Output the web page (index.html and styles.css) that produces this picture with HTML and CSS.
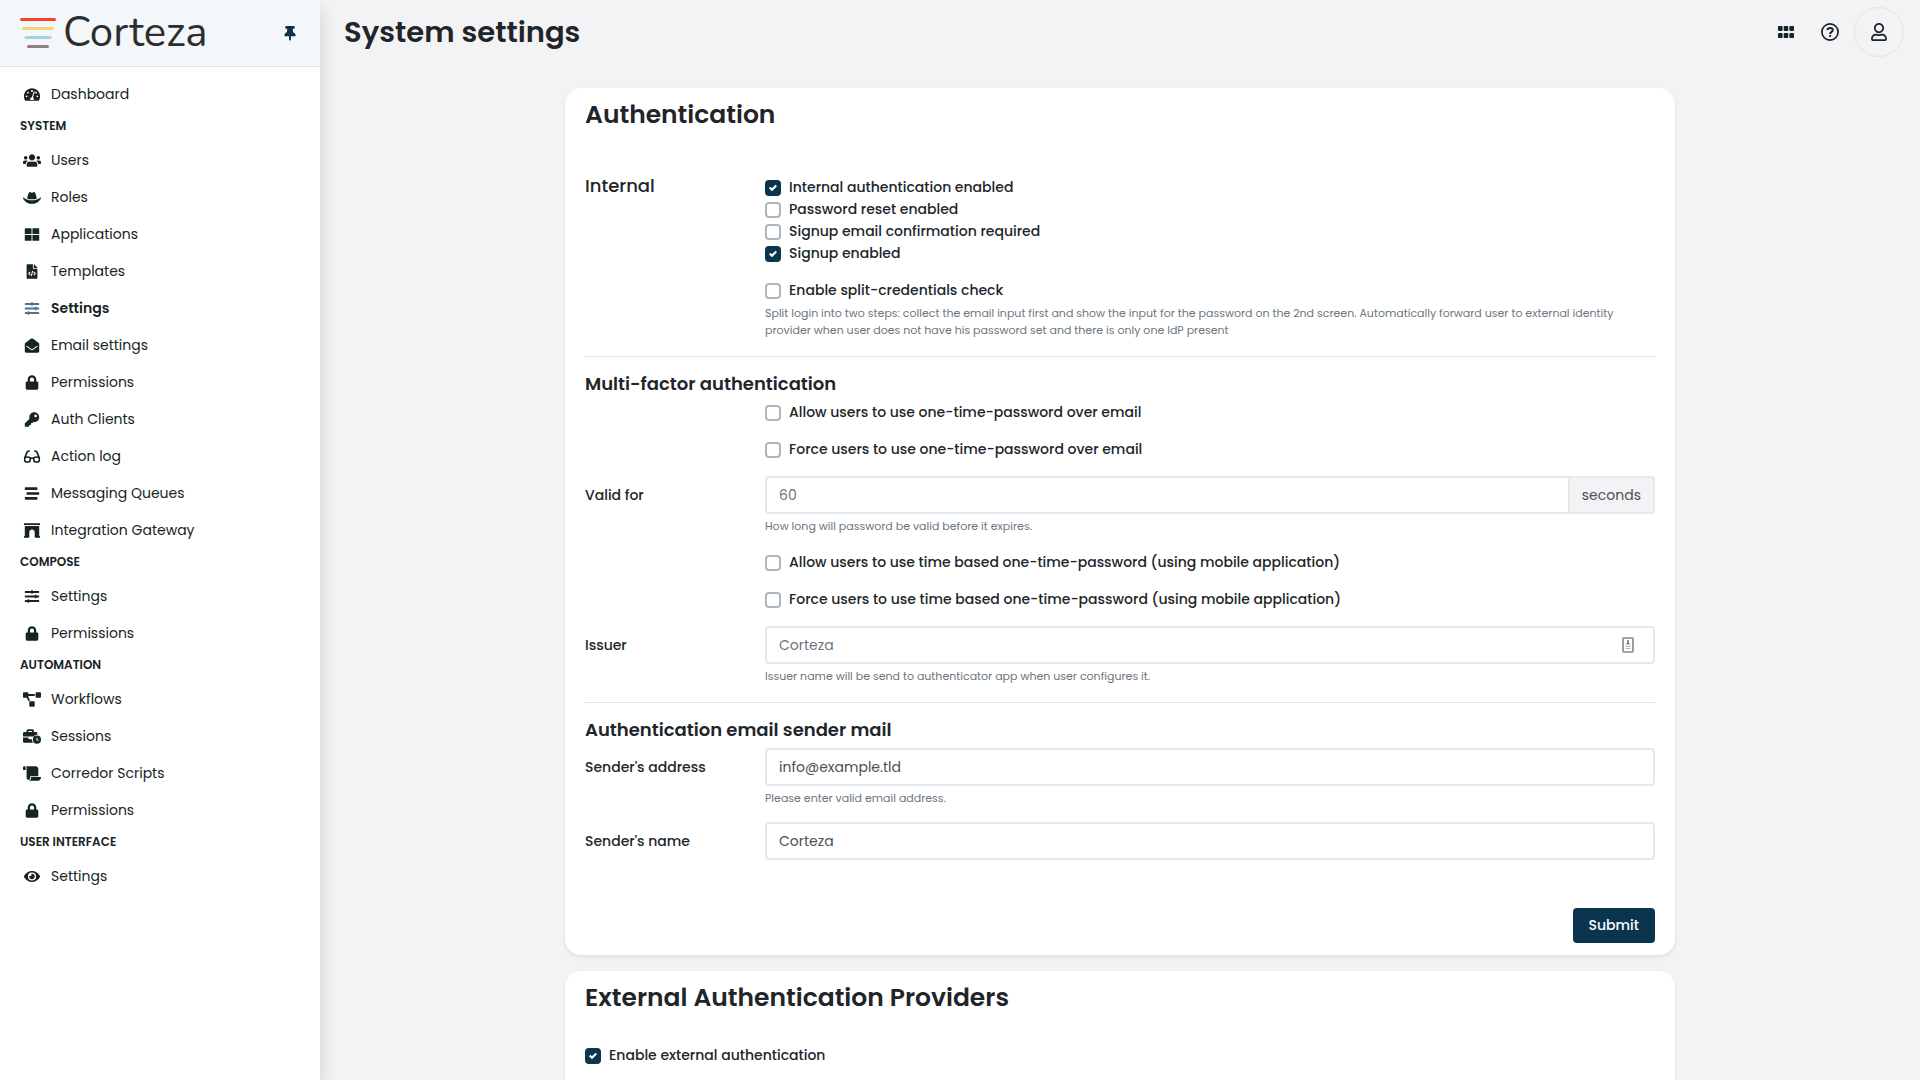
FILE: index.html
```html
<!DOCTYPE html>
<html lang="en">
<head>
<meta charset="utf-8">
<meta name="viewport" content="width=device-width, initial-scale=1">
<title>System settings</title>
<link rel="stylesheet" href="styles.css">
</head>
<body>
<svg class="sprite" aria-hidden="true">
  <symbol id="i-lock" viewBox="-96 0 640 512"><path d="M400 224h-24v-72C376 68.2 307.8 0 224 0S72 68.2 72 152v72H48c-26.5 0-48 21.5-48 48v192c0 26.5 21.5 48 48 48h352c26.5 0 48-21.5 48-48V272c0-26.5-21.5-48-48-48zm-104 0H152v-72c0-39.7 32.3-72 72-72s72 32.3 72 72v72z"/></symbol>
  <symbol id="i-sliders" viewBox="-64 0 640 512"><path d="M496 384H160v-16c0-8.800-7.200-16-16-16h-32c-8.800 0-16 7.200-16 16v16H16c-8.800 0-16 7.200-16 16v32c0 8.800 7.200 16 16 16h80v16c0 8.800 7.200 16 16 16h32c8.800 0 16-7.200 16-16v-16h336c8.800 0 16-7.200 16-16v-32c0-8.800-7.200-16-16-16zm0-160h-80v-16c0-8.800-7.200-16-16-16h-32c-8.800 0-16 7.200-16 16v16H16c-8.800 0-16 7.200-16 16v32c0 8.800 7.200 16 16 16h336v16c0 8.800 7.200 16 16 16h32c8.800 0 16-7.200 16-16v-16h80c8.800 0 16-7.200 16-16v-32c0-8.800-7.200-16-16-16zm0-160H288V48c0-8.800-7.200-16-16-16h-32c-8.800 0-16 7.200-16 16v16H16C7.200 64 0 71.200 0 80v32c0 8.800 7.200 16 16 16h208v16c0 8.800 7.200 16 16 16h32c8.800 0 16-7.200 16-16v-16h208c8.800 0 16-7.200 16-16V80c0-8.800-7.200-16-16-16z"/></symbol>
</svg>

<div class="app">
  <aside class="sidebar">
    <div class="brand">
      <a class="logo" href="#">
        <svg width="36" height="32" viewBox="0 0 36 32" stroke-width="3" stroke-linecap="round" aria-hidden="true"><path stroke="#f2442b" d="M1.500 2.500h33"/><path stroke="#f6cf7a" d="M3.500 11.500h29"/><path stroke="#a5d2e6" d="M6 20.500h24"/><path stroke="#8f817f" d="M8.500 29.500h19"/></svg>
        <span>Corteza</span>
      </a>
      <button class="pin" type="button" aria-label="Pin sidebar"><svg width="12" height="15" viewBox="0 0 384 512"><path d="M298.028 214.267L285.793 96H328c13.255 0 24-10.745 24-24V24c0-13.255-10.745-24-24-24H56C42.745 0 32 10.745 32 24v48c0 13.255 10.745 24 24 24h42.207L85.972 214.267C37.465 236.820 0 277.261 0 328c0 13.255 10.745 24 24 24h136v104.007c0 1.242.289 2.467.845 3.578l24 48c2.941 5.882 11.364 5.893 14.311 0l24-48a8.008 8.008 0 0 0 .845-3.578V352h136c13.255 0 24-10.745 24-24-.001-51.183-37.983-91.420-85.973-113.733z"/></svg></button>
    </div>
    <nav class="nav">
      <a href="#"><svg viewBox="-32 0 640 512"><path fill-rule="evenodd" d="M288 32C129 32 0 161 0 320c0 53 14 102 39 145 6 10 16 15 27 15h444c11 0 21-5 27-15 25-43 39-92 39-145C576 161 447 32 288 32zM96 352a32 32 0 1 1 0-64 32 32 0 0 1 0 64zm48-128a32 32 0 1 1 0-64 32 32 0 0 1 0 64zm144-128a32 32 0 0 1 31 40l-10 30c-6 5-12 4-21 4a32 32 0 1 1 0-74zm81 44c13 4 20 18 15 31l-61 184c18 15 29 35 29 61 0 12-3 23-9 32H233c-6-9-9-20-9-32 0-34 26-62 60-64l61-183c4-13 18-33 24-29zM432 160a32 32 0 1 1 0 64 32 32 0 0 1 0-64zm48 192a32 32 0 1 1 0-64 32 32 0 0 1 0 64z"/></svg>Dashboard</a>
      <h2>System</h2>
      <a href="#"><svg viewBox="0 0 640 512"><path d="M96 224c35.300 0 64-28.700 64-64s-28.700-64-64-64-64 28.700-64 64 28.700 64 64 64zm448 0c35.300 0 64-28.700 64-64s-28.700-64-64-64-64 28.700-64 64 28.700 64 64 64zm32 32h-64c-17.600 0-33.500 7.100-45.100 18.600 40.300 22.100 68.900 62 75.100 109.400h66c17.700 0 32-14.300 32-32v-32c0-35.300-28.700-64-64-64zm-256 0c61.900 0 112-50.100 112-112S381.900 32 320 32 208 82.100 208 144s50.100 112 112 112zm76.800 32h-8.300c-20.800 10-43.900 16-68.500 16s-47.600-6-68.500-16h-8.300C179.600 288 128 339.600 128 403.200V432c0 26.500 21.500 48 48 48h288c26.500 0 48-21.500 48-48v-28.800c0-63.600-51.600-115.200-115.200-115.200zm-223.700-13.400C161.500 263.100 145.600 256 128 256H64c-35.300 0-64 28.700-64 64v32c0 17.700 14.300 32 32 32h65.900c6.300-47.400 34.900-87.300 75.200-109.400z"/></svg>Users</a>
      <a href="#"><svg viewBox="0 0 640 512"><path d="M490 296.900C480.510 239.510 450.510 64 392.300 64c-14 0-26.490 5.930-37 14a58.210 58.210 0 0 1-70.580 0c-10.510-8-23-14-37-14-58.200 0-88.200 175.470-97.710 232.880C188.810 309.470 243.730 320 320 320s131.230-10.510 170-23.100zm142.900-37.180a16 16 0 0 0-19.750 1.500c-1 .9-101.270 90.780-293.160 90.780-190.820 0-292.220-89.940-293.240-90.840A16 16 0 0 0 1 278.530C1.730 280.550 78.320 480 320 480s318.270-199.450 319-201.470a16 16 0 0 0-6.090-18.810z"/></svg>Roles</a>
      <a href="#"><svg viewBox="-64 0 640 512"><path d="M24 32h192a24 24 0 0 1 24 24v184H0V56a24 24 0 0 1 24-24zM272 32h216a24 24 0 0 1 24 24v184H272zM0 272h240v208H24a24 24 0 0 1-24-24zM272 272h240v184a24 24 0 0 1-24 24H272z"/></svg>Applications</a>
      <a href="#"><svg viewBox="-128 0 640 512"><path d="M384 121.941V128H256V0h6.059c6.365 0 12.470 2.529 16.971 7.029l97.941 97.941A24.005 24.005 0 0 1 384 121.941zM248 160c-13.200 0-24-10.800-24-24V0H24C10.745 0 0 10.745 0 24v464c0 13.255 10.745 24 24 24h336c13.255 0 24-10.745 24-24V160H248z"/><path fill="none" stroke="#fff" stroke-width="36" d="M130 270l-56 58 56 58M254 270l56 58-56 58M216 236l-48 184"/></svg>Templates</a>
      <a class="active" href="#" aria-current="page"><svg><use href="#i-sliders"/></svg>Settings</a>
      <a href="#"><svg viewBox="-64 0 640 512"><path d="M512 464c0 26.510-21.490 48-48 48H48c-26.510 0-48-21.490-48-48V200.724a48 48 0 0 1 18.387-37.776c24.913-19.529 45.501-35.365 164.200-121.511C199.412 29.170 232.797-.347 256 .003c23.198-.354 56.596 29.172 73.413 41.433 118.687 86.137 139.303 101.995 164.200 121.512A48 48 0 0 1 512 200.724V464zm-65.666-196.605c-2.563-3.728-7.700-4.595-11.339-1.907-22.845 16.873-55.462 40.705-105.582 77.079-16.825 12.266-50.210 41.781-73.413 41.430-23.211.344-56.559-29.143-73.413-41.430-50.114-36.370-82.734-60.204-105.582-77.079-3.639-2.688-8.776-1.821-11.339 1.907l-9.072 13.196a7.998 7.998 0 0 0 1.839 10.967c22.887 16.899 55.454 40.690 105.303 76.868 20.274 14.781 56.524 47.813 92.264 47.573 35.724.242 71.961-32.771 92.263-47.573 49.850-36.179 82.418-59.970 105.303-76.868a7.998 7.998 0 0 0 1.839-10.967l-9.071-13.196z"/></svg>Email settings</a>
      <a href="#"><svg><use href="#i-lock"/></svg>Permissions</a>
      <a href="#"><svg viewBox="-64 0 640 512"><path d="M512 176.001C512 273.203 433.202 352 336 352c-11.220 0-22.190-1.062-32.827-3.069l-24.012 27.014A23.999 23.999 0 0 1 261.223 384H224v40c0 13.255-10.745 24-24 24h-40v40c0 13.255-10.745 24-24 24H24c-13.255 0-24-10.745-24-24v-78.059c0-6.365 2.529-12.470 7.029-16.971l161.802-161.802C163.108 213.814 160 195.271 160 176 160 78.798 238.797.001 335.999 0 433.488-.001 512 78.511 512 176.001zM336 128c0 26.510 21.490 48 48 48s48-21.490 48-48-21.490-48-48-48-48 21.490-48 48z"/></svg>Auth Clients</a>
      <a href="#"><svg viewBox="-32 0 640 512"><path fill="none" stroke="currentColor" stroke-width="58" stroke-linecap="round" d="M192 61h-24c-28 0-46 10-54 40L34 292M384 61h24c28 0 46 10 54 40l80 191M30 300v76c0 44 32 75 76 75h38c44 0 78-31 80-75l4-80c-60-26-140-26-198-6zM546 300v76c0 44-32 75-76 75h-38c-44 0-78-31-80-75l-4-80c60-26 140-26 198-6zM232 318h112"/></svg>Action log</a>
      <a href="#"><svg viewBox="-64 0 640 512"><path d="M16 128h416c8.840 0 16-7.160 16-16V48c0-8.840-7.160-16-16-16H16C7.160 32 0 39.160 0 48v64c0 8.840 7.160 16 16 16zm480 80H80c-8.840 0-16 7.160-16 16v64c0 8.840 7.160 16 16 16h416c8.840 0 16-7.160 16-16v-64c0-8.840-7.160-16-16-16zm-64 176H16c-8.840 0-16 7.160-16 16v64c0 8.840 7.160 16 16 16h416c8.840 0 16-7.160 16-16v-64c0-8.840-7.160-16-16-16z"/></svg>Messaging Queues</a>
      <a href="#"><svg viewBox="-32 0 640 512"><path d="M560 448h-16V96H32v352H16.020c-8.840 0-16 7.160-16 16v32c0 8.840 7.160 16 16 16H176c8.840 0 16-7.160 16-16V320c0-53.020 42.980-96 96-96s96 42.980 96 96l.02 160v16c0 8.840 7.160 16 16 16H560c8.840 0 16-7.160 16-16v-32c0-8.840-7.160-16-16-16zm0-448H16C7.160 0 0 7.160 0 16v32c0 8.840 7.160 16 16 16h544c8.840 0 16-7.160 16-16V16c0-8.840-7.160-16-16-16z"/></svg>Integration Gateway</a>
      <h2>Compose</h2>
      <a href="#"><svg><use href="#i-sliders"/></svg>Settings</a>
      <a href="#"><svg><use href="#i-lock"/></svg>Permissions</a>
      <h2>Automation</h2>
      <a href="#"><svg viewBox="0 0 640 512"><path d="M384 320H256c-17.670 0-32 14.330-32 32v128c0 17.670 14.330 32 32 32h128c17.670 0 32-14.330 32-32V352c0-17.670-14.330-32-32-32zM192 32c0-17.670-14.330-32-32-32H32C14.330 0 0 14.330 0 32v128c0 17.670 14.330 32 32 32h95.720l73.160 128.040C211.980 300.980 232.400 288 256 288h.28L192 175.510V128h224V64H192V32zM608 0H480c-17.670 0-32 14.330-32 32v128c0 17.670 14.330 32 32 32h128c17.670 0 32-14.330 32-32V32c0-17.670-14.330-32-32-32z"/></svg>Workflows</a>
      <a href="#"><svg viewBox="0 0 640 512"><path fill-rule="evenodd" d="M496 224a144 144 0 1 0 0 288 144 144 0 0 0 0-288zm-16 64h32v80h48v32h-80zM320 96V64H192v32h-64V48c0-26 22-48 48-48h160c26 0 48 22 48 48v48h80c26 0 48 22 48 48v48c-62 0-112 24-144 64H0V144c0-26 22-48 48-48zM0 288h192v32c0 18 14 32 32 32h96c0 48 12 92 42 128H48c-26 0-48-22-48-48z"/></svg>Sessions</a>
      <a href="#"><svg viewBox="0 0 640 512"><path d="M48 0C21.530 0 0 21.530 0 48v64c0 8.840 7.160 16 16 16h80V48C96 21.530 74.470 0 48 0zm208 412.570V352h288V96c0-52.940-43.060-96-96-96H111.590C121.740 13.410 128 29.920 128 48v368c0 38.870 34.650 69.650 74.750 63.120C234.220 474 256 444.460 256 412.570zM288 384v32c0 52.930-43.060 96-96 96h336c61.860 0 112-50.140 112-112 0-8.840-7.160-16-16-16H288z"/></svg>Corredor Scripts</a>
      <a href="#"><svg><use href="#i-lock"/></svg>Permissions</a>
      <h2>User Interface</h2>
      <a href="#"><svg viewBox="-32 0 640 512"><path d="M572.520 241.400C518.290 135.590 410.930 64 288 64S57.680 135.640 3.480 241.410a32.350 32.350 0 0 0 0 29.190C57.710 376.410 165.070 448 288 448s230.320-71.640 284.520-177.410a32.350 32.350 0 0 0 0-29.190zM288 400a144 144 0 1 1 144-144 143.930 143.930 0 0 1-144 144zm0-240a95.310 95.310 0 0 0-25.310 3.790 47.850 47.850 0 0 1-66.900 66.900A95.780 95.780 0 1 0 288 160z"/></svg>Settings</a>
    </nav>
  </aside>

  <div class="page">
    <header class="topbar">
      <h1>System settings</h1>
      <div class="tools">
        <button class="tool" type="button" aria-label="Applications"><svg width="16" height="12" viewBox="0 0 16 12"><rect width="4.600" height="5" rx="1"/><rect x="5.700" width="4.600" height="5" rx="1"/><rect x="11.400" width="4.600" height="5" rx="1"/><rect y="7" width="4.600" height="5" rx="1"/><rect x="5.700" y="7" width="4.600" height="5" rx="1"/><rect x="11.400" y="7" width="4.600" height="5" rx="1"/></svg></button>
        <button class="tool" type="button" aria-label="Help"><svg width="18" height="18" viewBox="0 0 18 18" stroke="currentColor"><circle cx="9" cy="9" r="8.100" fill="none" stroke-width="1.700"/><path fill="none" stroke-width="2" d="M6.300 6.900C6.700 5.500 7.700 4.900 9 4.900c1.600 0 2.800.9 2.800 2.200 0 1.900-2.700 1.900-2.700 3.900"/><circle cx="9.100" cy="13" r=".7"/></svg></button>
        <button class="avatar" type="button" aria-label="Account"><svg width="16" height="18" viewBox="0 0 448 512"><path d="M313.600 304c-28.700 0-42.500 16-89.600 16-47.100 0-60.800-16-89.600-16C60.200 304 0 364.200 0 438.400V464c0 26.500 21.500 48 48 48h352c26.500 0 48-21.500 48-48v-25.600c0-74.200-60.200-134.400-134.400-134.400zM400 464H48v-25.600c0-47.600 38.800-86.400 86.400-86.400 14.600 0 38.300 16 89.600 16 51.700 0 74.900-16 89.600-16 47.600 0 86.400 38.800 86.400 86.400V464zM224 288c79.500 0 144-64.500 144-144S303.500 0 224 0 80 64.500 80 144s64.500 144 144 144zm0-240c52.900 0 96 43.100 96 96s-43.100 96-96 96-96-43.100-96-96 43.100-96 96-96z"/></svg></button>
      </div>
    </header>

    <main class="content">
      <section class="card">
        <h2 class="card-title">Authentication</h2>
        <form class="form">
          <div class="row">
            <h3 class="legend">Internal</h3>
            <div class="stack">
              <div class="checks">
                <label class="check"><input type="checkbox" checked>Internal authentication enabled</label>
                <label class="check"><input type="checkbox">Password reset enabled</label>
                <label class="check"><input type="checkbox">Signup email confirmation required</label>
                <label class="check"><input type="checkbox" checked>Signup enabled</label>
              </div>
              <div>
                <label class="check"><input type="checkbox">Enable split-credentials check</label>
                <p class="help">Split login into two steps: collect the email input first and show the input for the password on the 2nd screen. Automatically forward user to external identity provider when user does not have his password set and there is only one IdP present</p>
              </div>
            </div>
          </div>
          <hr>
          <h3 class="section">Multi-factor authentication</h3>
          <div class="stack">
            <label class="check inset"><input type="checkbox">Allow users to use one-time-password over email</label>
            <label class="check inset"><input type="checkbox">Force users to use one-time-password over email</label>
            <div class="row">
              <label class="label" for="valid">Valid for</label>
              <div class="field">
                <div class="group"><input class="control" id="valid" type="text" placeholder="60"><span class="addon">seconds</span></div>
                <p class="help">How long will password be valid before it expires.</p>
              </div>
            </div>
            <label class="check inset"><input type="checkbox">Allow users to use time based one-time-password (using mobile application)</label>
            <label class="check inset"><input type="checkbox">Force users to use time based one-time-password (using mobile application)</label>
            <div class="row">
              <label class="label" for="issuer">Issuer</label>
              <div class="field">
                <div class="group"><input class="control" id="issuer" type="text" placeholder="Corteza">
                  <svg class="autofill" width="12" height="16" viewBox="0 0 12 16" aria-hidden="true"><rect x="1" y="1" width="10" height="14" rx="1" fill="none" stroke="#868686" stroke-width="1.600"/><path fill="#777" d="M5.200 3h1.600v2.500L8 7.500H4l1.200-2z"/><path fill="#b5b5b5" d="M3.500 9h5v1h-5zM3.500 11h5v1h-5z"/></svg>
                </div>
                <p class="help">Issuer name will be send to authenticator app when user configures it.</p>
              </div>
            </div>
          </div>
          <hr>
          <h3 class="section">Authentication email sender mail</h3>
          <div class="stack tight">
            <div class="row">
              <label class="label" for="address">Sender's address</label>
              <div class="field">
                <input class="control" id="address" type="email" value="info@example.tld">
                <p class="help">Please enter valid email address.</p>
              </div>
            </div>
            <div class="row">
              <label class="label" for="name">Sender's name</label>
              <div class="field"><input class="control" id="name" type="text" value="Corteza"></div>
            </div>
          </div>
          <div class="actions"><button class="submit" type="submit">Submit</button></div>
        </form>
      </section>

      <section class="card">
        <h2 class="card-title">External Authentication Providers</h2>
        <form class="form compact">
          <label class="check"><input type="checkbox" checked>Enable external authentication</label>
        </form>
      </section>
    </main>
  </div>
</div>
</body>
</html>
```
FILE: styles.css
```css
* { box-sizing: border-box; }

body {
  margin: 0;
  background: #f3f3f5;
  color: #212529;
  font: 400 14px/21px Poppins, Inter, sans-serif;
}

h1, h2, h3, p { margin: 0; }
svg { display: block; fill: currentColor; }
.sprite { display: none; }
button, input { font: inherit; color: inherit; }
button { border: 0; background: none; cursor: pointer; }

.app {
  display: grid;
  grid-template-columns: 320px 1fr;
  height: 100vh;
}

/* Sidebar */
.sidebar {
  z-index: 1;
  overflow: hidden auto;
  scrollbar-width: none;
  background: #fff;
  color: #162425;
  box-shadow: 0 8px 16px rgba(0, 0, 0, .15);
}

.brand {
  display: flex;
  align-items: center;
  justify-content: space-between;
  height: 67px;
  padding: 0 20px;
  background: #f3f7fa;
  border-bottom: 1px solid #dee2e6;
}

.logo {
  display: flex;
  align-items: center;
  gap: 7px;
  color: #2d2d2d;
  font: 400 42px/48px Nunito, Lato, sans-serif;
  text-decoration: none;
}

.pin { display: flex; padding: 4px; color: #0b344e; }

.nav { padding: 9px 20px; }

.nav a {
  display: flex;
  align-items: center;
  gap: 10px;
  height: 37px;
  padding-left: 3px;
  color: inherit;
  text-decoration: none;
}

.nav svg { flex: none; width: 18px; height: 15px; }
.nav .active { font-weight: 600; }
.nav .active svg { color: #4a7590; }

.nav h2 {
  font-size: 12px;
  font-weight: 600;
  line-height: 25px;
  padding-bottom: 4px;
  text-transform: uppercase;
}

/* Top bar */
.page { min-width: 0; overflow: hidden auto; scrollbar-width: none; }

.topbar {
  display: flex;
  align-items: center;
  justify-content: space-between;
  height: 64px;
  padding: 0 16px 0 24px;
}

.topbar h1 { font-size: 29px; font-weight: 600; line-height: 36px; }
.tools { display: flex; align-items: center; gap: 4px; color: #162425; }
.tool { display: grid; place-items: center; width: 40px; height: 40px; padding: 0; }

.avatar {
  display: grid;
  place-items: center;
  width: 50px;
  height: 50px;
  padding: 0;
  border: 1px solid #e2e3e6;
  border-radius: 50%;
}

/* Cards */
.content {
  display: flex;
  flex-direction: column;
  gap: 16px;
  max-width: 1142px;
  margin: 0 auto;
  padding: 24px 16px;
}

.card {
  padding: 8px 20px 12px;
  background: #fff;
  border-radius: 16px;
  box-shadow: 0 2px 4px rgba(0, 0, 0, .08);
}

.card-title { font-size: 25px; font-weight: 600; line-height: 38px; }
.form { padding-top: 43px; }
.form.compact { padding: 28px 0 48px; }

.stack { display: flex; flex-direction: column; gap: 16px; }
.stack.tight { gap: 14px; }
.row { display: grid; grid-template-columns: 180px 1fr; }
.legend { font-size: 18px; font-weight: 500; line-height: 18px; }
.section { margin-bottom: 6px; font-size: 18px; font-weight: 600; line-height: 24px; }
.label { align-self: start; font-weight: 500; line-height: 38px; }

hr {
  height: 1px;
  margin: 16px 0 15px;
  border: 0;
  background: #e0e2e5;
}

.checks { display: flex; flex-direction: column; gap: 1px; }

.check {
  display: flex;
  align-items: center;
  align-self: flex-start;
  gap: 8px;
  font-weight: 500;
}

.inset { margin-left: 180px; }

.check input {
  appearance: none;
  width: 16px;
  height: 16px;
  margin: 0;
  border: 2px solid #adb5bd;
  border-radius: 4px;
  background: #fff;
}

.check input:checked {
  border-color: #0b344e;
  background: #0b344e url("data:image/svg+xml,%3Csvg xmlns='http://www.w3.org/2000/svg' viewBox='0 0 8 8'%3E%3Cpath fill='%23fff' d='M6.564.75l-3.590 3.612-1.538-1.550L0 4.260l2.974 2.990L8 2.193z'/%3E%3C/svg%3E") center / 8px 8px no-repeat;
}

.help { margin: 4px 0 1px; color: #6c757d; font-size: 11px; line-height: 17px; }

.group { position: relative; display: flex; }

.control {
  display: block;
  flex: 1;
  width: 100%;
  min-width: 0;
  height: 38px;
  padding: 0 12px;
  border: 2px solid #e4e9ef;
  border-radius: 4px;
  outline: 0;
  background: #fff;
  color: #495057;
}

.control::placeholder { color: #6c757d; opacity: 1; }
.control:has(+ .addon) { border-radius: 4px 0 0 4px; }

.addon {
  margin-left: -2px;
  padding: 0 12px;
  border: 2px solid #e4e9ef;
  border-radius: 0 4px 4px 0;
  background: #f3f3f5;
  color: #495057;
  line-height: 34px;
}

.autofill { position: absolute; top: 11px; right: 21px; }

.actions { display: flex; justify-content: flex-end; margin-top: 48px; }

.submit {
  height: 35px;
  padding: 0 16px;
  border-radius: 4px;
  background: #0b344e;
  color: #fff;
  font-weight: 500;
}
```
